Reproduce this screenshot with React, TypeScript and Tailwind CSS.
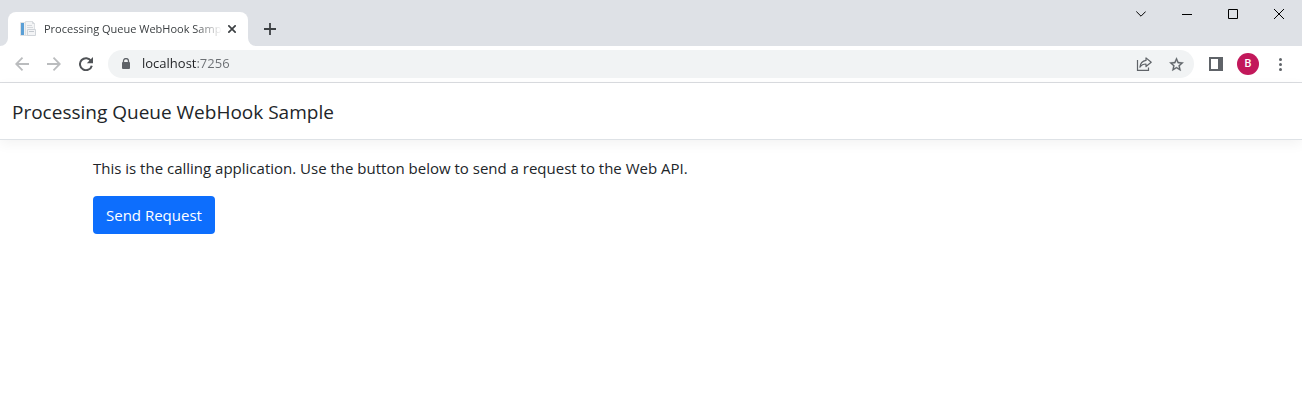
import { ReactNode, useState } from "react";

type IconButtonProps = {
  label: string;
  className?: string;
  onClick?: () => void;
  children: ReactNode;
};

function IconButton({ label, className = "text-[#5f6368]", onClick, children }: IconButtonProps) {
  return (
    <button
      type="button"
      aria-label={label}
      onClick={onClick}
      className={`flex h-7 w-7 shrink-0 items-center justify-center rounded-full ${className}`}
    >
      {children}
    </button>
  );
}

function WindowButton({ label, children }: { label: string; children: ReactNode }) {
  return (
    <button type="button" aria-label={label} className="flex h-7 w-[46px] items-center justify-center text-black">
      {children}
    </button>
  );
}

function Favicon() {
  return (
    <svg width="16" height="16" viewBox="0 0 16 16" className="shrink-0" aria-hidden="true">
      <path d="M.5 1.5h9v13h-9z" fill="#eef0f2" stroke="#dfe2e5" />
      <path d="M1 2h3v12H1z" fill="#5a9fd6" />
      <path d="M5.500.5h7l2 2v12h-9z" fill="#f4f5f6" stroke="#dcdfe2" />
      <path d="M12.500.5v2h2" fill="none" stroke="#d5d8dc" />
      <path d="M7 4.500h5M7 6.500h6" stroke="#d5d8dc" />
      <path d="M7.500 8.500h8v6h-8z" fill="#f3f4f6" stroke="#d0d4d9" />
      <path d="M9 10.500h5" stroke="#c3c8ce" />
    </svg>
  );
}

function TabStrip() {
  return (
    <div className="flex justify-between bg-[#dee1e6]">
      <div className="flex items-end pt-3">
        <svg width="8" height="8" viewBox="0 0 8 8" className="text-white" aria-hidden="true">
          <path d="M8 0v8H0a8 8 0 0 0 8-8z" fill="currentColor" />
        </svg>
        <div className="flex h-[34px] w-60 items-center rounded-t-lg bg-white pr-1.5 pl-3">
          <button type="button" className="flex min-w-0 flex-1 items-center gap-2 text-left">
            <Favicon />
            <span className="flex-1 overflow-hidden text-[11px] leading-4 whitespace-nowrap text-[#3c4043] mask-r-from-85%">
              Processing Queue WebHook Sample
            </span>
          </button>
          <button type="button" aria-label="Close tab" className="flex h-5 w-5 items-center justify-center text-[#3c4043]">
            <svg width="8" height="8" viewBox="0 0 8 8" aria-hidden="true">
              <path d="M.3.3l7.400 7.400M7.700.3L.3 7.700" stroke="currentColor" strokeWidth="1.700" />
            </svg>
          </button>
        </div>
        <svg width="8" height="8" viewBox="0 0 8 8" className="text-white" aria-hidden="true">
          <path d="M0 0v8h8a8 8 0 0 1-8-8z" fill="currentColor" />
        </svg>
        <div className="flex h-[34px] items-center">
          <IconButton label="New tab" className="text-[#3c4043]">
            <svg width="12" height="12" viewBox="0 0 12 12" aria-hidden="true">
              <path d="M6 0v12M0 6h12" stroke="currentColor" strokeWidth="1.800" />
            </svg>
          </IconButton>
        </div>
      </div>

      <div className="flex">
        <WindowButton label="Search tabs">
          <svg width="10" height="6" viewBox="0 0 10 6" fill="none" stroke="currentColor" aria-hidden="true">
            <path d="M.3.5L5 5.200 9.700.5" />
          </svg>
        </WindowButton>
        <WindowButton label="Minimize">
          <svg width="10" height="10" viewBox="0 0 10 10" stroke="currentColor" aria-hidden="true">
            <path d="M0 5.500h10" />
          </svg>
        </WindowButton>
        <WindowButton label="Maximize">
          <svg width="10" height="10" viewBox="0 0 10 10" fill="none" stroke="currentColor" aria-hidden="true">
            <path d="M.5.5h9v9h-9z" />
          </svg>
        </WindowButton>
        <WindowButton label="Close">
          <svg width="10" height="10" viewBox="0 0 10 10" stroke="currentColor" aria-hidden="true">
            <path d="M0 0l10 10M10 0L0 10" />
          </svg>
        </WindowButton>
      </div>
    </div>
  );
}

function Toolbar() {
  const [address, setAddress] = useState("localhost:7256");

  return (
    <div className="flex items-center gap-2 border-b border-[#dadce0] bg-white px-2 py-1">
      <div className="flex gap-1">
        <IconButton label="Back" className="text-[#babcbe]">
          <svg width="14" height="14" viewBox="0 0 14 14" fill="none" stroke="currentColor" strokeWidth="1.800" aria-hidden="true">
            <path d="M14 7H1.500M7.500.7L1.200 7l6.300 6.300" />
          </svg>
        </IconButton>
        <IconButton label="Forward" className="text-[#babcbe]">
          <svg width="14" height="14" viewBox="0 0 14 14" fill="none" stroke="currentColor" strokeWidth="1.800" aria-hidden="true">
            <path d="M0 7h12.500M6.500.7L12.800 7l-6.300 6.300" />
          </svg>
        </IconButton>
        <IconButton label="Reload" className="text-[#505357]">
          <svg width="14" height="14" viewBox="0 0 14 14" aria-hidden="true">
            <path d="M12.100 4A6 6 0 1 0 12.800 8.700" fill="none" stroke="currentColor" strokeWidth="2" />
            <path d="M14 0v6.200H7.800z" fill="currentColor" />
          </svg>
        </IconButton>
      </div>

      <div className="flex h-7 min-w-0 flex-1 items-center rounded-full bg-[#f1f3f4] pr-1 pl-[13px]">
        <svg width="10" height="12" viewBox="0 0 10 12" className="shrink-0" aria-hidden="true">
          <path d="M2.500 5V3a2.500 2.500 0 0 1 5 0v2" fill="none" stroke="#5f6368" strokeWidth="1.300" />
          <rect x="1" y="4" width="8" height="7" rx="1" fill="#5f6368" />
        </svg>
        <input
          type="text"
          aria-label="Address"
          value={address}
          onChange={(e) => setAddress(e.target.value)}
          className="ml-[11px] min-w-0 flex-1 bg-linear-to-r from-[#202124] from-[55px] to-[#6b6f73] to-[55px] bg-clip-text text-[13px] text-transparent caret-black outline-none"
        />
        <div className="flex gap-1">
          <IconButton label="Share this page">
            <svg width="16" height="14" viewBox="0 0 16 14" fill="none" stroke="currentColor" strokeWidth="1.200" aria-hidden="true">
              <path d="M1.500 3v10.400h11V10.500" />
              <path d="M10 .9L15.200 5.200 10 9.500V7C7.200 7 5.300 8 3.900 10.200 4.300 6.600 6.400 3.900 10 3.400z" strokeLinejoin="round" />
            </svg>
          </IconButton>
          <IconButton label="Bookmark this tab">
            <svg width="17" height="17" viewBox="0 0 24 24" fill="currentColor" stroke="currentColor" strokeWidth=".4" aria-hidden="true">
              <path
                fillRule="evenodd"
                d="M22 9.240l-7.190-.62L12 2 9.190 8.630 2 9.240l5.460 4.730L5.820 21 12 17.270 18.180 21l-1.630-7.030zM12 15.400l-3.760 2.270 1-4.280-3.320-2.880 4.380-.38L12 6.100l1.710 4.040 4.380.38-3.320 2.880 1 4.280z"
              />
            </svg>
          </IconButton>
        </div>
      </div>

      <div className="flex gap-1">
        <IconButton label="Side panel">
          <svg width="14" height="14" viewBox="0 0 14 14" aria-hidden="true">
            <path d="M0 0h14v14H0zM2 2v10h7V2z" fill="currentColor" fillRule="evenodd" />
          </svg>
        </IconButton>
        <IconButton label="Profile" className="text-white">
          <span className="flex h-[22px] w-[22px] items-center justify-center rounded-full bg-[#c2185b] font-[Roboto,sans-serif] text-[11px] font-medium">
            B
          </span>
        </IconButton>
        <IconButton label="Menu">
          <svg width="4" height="14" viewBox="0 0 4 14" fill="currentColor" aria-hidden="true">
            <circle cx="2.500" cy="2.500" r="1.500" />
            <circle cx="2.500" cy="7.500" r="1.500" />
            <circle cx="2.500" cy="12.500" r="1.500" />
          </svg>
        </IconButton>
      </div>
    </div>
  );
}

export default function App() {
  return (
    <div className="min-h-screen bg-white font-['Segoe_UI','Open_Sans',sans-serif] text-[#212529]">
      <TabStrip />
      <Toolbar />

      <header>
        <nav className="flex items-center border-b border-[#dee2e6] px-3 pt-3.5 pb-3 shadow-[0_4px_12px_rgba(0,0,0,0.05)]">
          <a href="/" className="text-[19px] leading-[30px]">
            Processing Queue WebHook Sample
          </a>
        </nav>
      </header>

      <main className="mx-auto max-w-[1140px] px-3 py-4">
        <p className="mb-4 text-[15px] leading-6">
          This is the calling application. Use the button below to send a request to the Web API.
        </p>
        <button type="button" className="rounded-sm bg-[#0d6efd] px-[13px] py-[7px] text-[15px] leading-6 text-white">
          Send Request
        </button>
      </main>
    </div>
  );
}
